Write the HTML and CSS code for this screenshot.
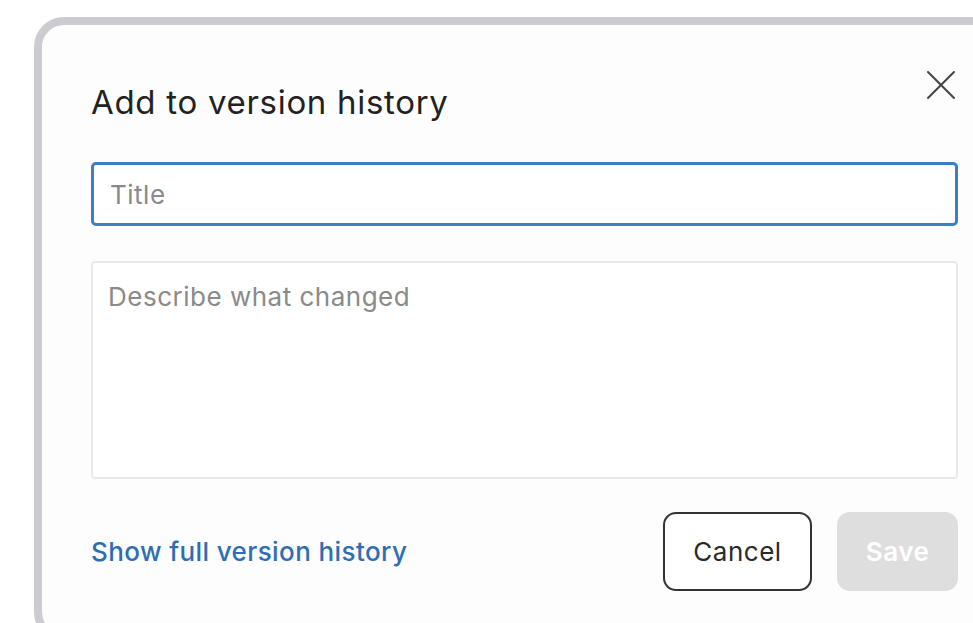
FILE: index.html
```html
<!DOCTYPE html>
<html lang="en">
<head>
<meta charset="utf-8">
<title>Add to version history</title>
<link rel="stylesheet" href="styles.css">
</head>
<body>
<div class="stage">
  <div class="dialog">
    <div class="dialog-inner">
      <div class="dialog-header">
        <h1 class="dialog-title">Add to version history</h1>
        <button class="close-btn" type="button" aria-label="Close">
          <svg width="30" height="30" viewBox="0 0 30 30" fill="none" stroke="#444" stroke-width="2" stroke-linecap="round">
            <path d="M2 2 L28 28 M28 2 L2 28"/>
          </svg>
        </button>
      </div>
      <input class="field field-title" type="text" placeholder="Title">
      <textarea class="field field-desc" placeholder="Describe what changed"></textarea>
      <div class="dialog-footer">
        <a class="history-link" href="#">Show full version history</a>
        <div class="actions">
          <button class="btn btn-cancel" type="button">Cancel</button>
          <button class="btn btn-save" type="button" disabled>Save</button>
        </div>
      </div>
    </div>
  </div>
</div>
</body>
</html>
```

FILE: styles.css
```css
html, body {
  margin: 0;
  padding: 0;
  background: #ffffff;
  height: 623px;
  overflow: hidden;
}

body {
  font-family: Inter, "Noto Sans", "Liberation Sans", sans-serif;
  color: #222;
}

.stage {
  padding: 17px 0 0 34px;
}

.dialog {
  width: 1000px;
  height: 625px;
  border: 8px solid #cbcbd1;
  border-radius: 30px;
  background: #fdfdfd;
  box-sizing: border-box;
}

.dialog-inner {
  width: 867px;
  padding: 45px 0 0 49px;
  display: flex;
  flex-direction: column;
}

.dialog-header {
  display: flex;
  justify-content: space-between;
  align-items: flex-start;
}

.dialog-title {
  margin: 13px 0 0;
  font-size: 33px;
  line-height: 38px;
  font-weight: 400;
  color: #222;
  letter-spacing: 0.7px;
}

.close-btn {
  border: 0;
  padding: 0;
  margin-right: 2px;
  background: transparent;
  width: 30px;
  height: 30px;
  display: block;
}

.close-btn svg {
  display: block;
}

.field {
  display: block;
  box-sizing: border-box;
  width: 100%;
  font-family: inherit;
  color: #222;
  background: #fff;
  outline: none;
  margin: 0;
  letter-spacing: 0.5px;
}

.field::placeholder {
  color: #8a8a8a;
  opacity: 1;
}

.field-title {
  margin-top: 41px;
  height: 64px;
  border: 3px solid #3d7ec5;
  border-radius: 5px;
  padding: 0 16px;
  font-size: 26px;
}

.field-desc {
  margin-top: 35px;
  height: 218px;
  border: 2px solid #e9e9e9;
  border-radius: 4px;
  padding: 18px 15px;
  font-size: 26px;
  line-height: 32px;
  resize: none;
}

.dialog-footer {
  margin-top: 33px;
  display: flex;
  align-items: center;
  justify-content: space-between;
}

.history-link {
  color: #2e6db5;
  text-decoration: none;
  font-size: 26px;
  font-weight: 500;
  letter-spacing: 0.4px;
}

.actions {
  display: flex;
  gap: 25px;
}

.btn {
  height: 79px;
  border-radius: 13px;
  font-family: inherit;
  font-size: 26px;
  letter-spacing: 0.5px;
  padding: 0;
  box-sizing: border-box;
}

.btn-cancel {
  width: 149px;
  border: 2px solid #333;
  background: #fff;
  color: #2a2a2a;
}

.btn-save {
  width: 121px;
  border: 0;
  background: #dedede;
  color: #fff;
  font-weight: 600;
}
```
